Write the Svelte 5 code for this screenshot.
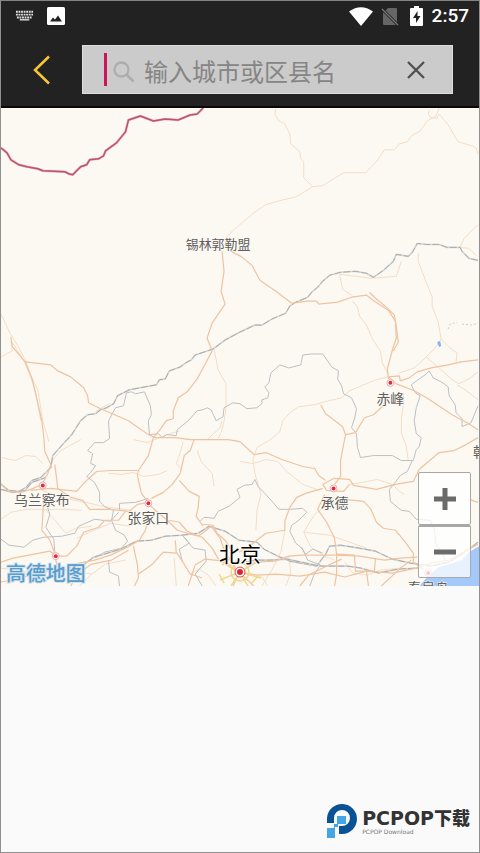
<script>
  let city = $state('');
  let zoom = $state(6);

  const tint = [
    '240,223 253,212 266,203 280,199 297,195 305,190 313,185 323,184 331,179 344,171 357,171 366,171 377,160 385,148 395,148 400,142 408,140 412,134 421,129 428,119 437,114 440,106',
    '276,107 275,112 279,119 285,122 290,132 291,142 300,150 301,157 304,160 304,176 313,185',
    '430,108 429,112 432,116 438,116 440,112 449,123 459,140 473,144 477,146 479,152',
    '479,223 465,237 461,246 470,247 478,255',
    '225,243 227,235 233,229 240,223',
    '419,252 419,260 427,281 433,296 433,305 439,321 442,338 436,347 427,356 415,367 400,372',
    '442,338 452,348 458,352 457,361',
    '340,273 343,288 352,294',
    '353,300 358,306 360,315 367,324 373,338 381,350 383,362 389,374',
    '340,273 372,277 397,275 402,260',
    '389,376 376,379 362,385 350,390 342,397 325,401 315,404 299,406 290,412 283,420 280,431 269,440 257,447 253,459',
    '427,356 440,367 452,378 460,383 470,378 479,371',
    '458,384 466,389 479,399',
    '0,356 11,350 11,341 24,361',
    '214,348 218,369 226,383 226,408 224,420 221,432 218,438',
    '95,411 103,406 109,403',
    '0,313 9,332 17,345 25,360 30,375 37,389 42,420 48,441',
    '24,361 34,388 40,420',
    '1,457 14,460 25,455 35,456 42,463',
    '50,462 60,450 69,445 80,439',
    '240,461 253,463 266,459 278,461 287,471 303,484 320,490',
    '253,459 255,473 261,494 257,510 256,530',
    '404,392 404,405 402,418 402,432 407,446 409,460',
    '350,484 363,482 378,479 393,484 400,491 405,494',
    '304,532 315,514 325,507',
    '41,490 64,498 85,502 102,506 131,510',
    '0,519 10,512 25,509 42,509 65,509 81,510',
    '45,509 50,516 55,521 65,533 75,528 91,526',
    '76,538 91,531 110,523 130,526',
    '133,439 147,442 167,434 180,430',
    '222,420 220,427 207,439',
    '167,470 158,474 143,476 133,472 121,474 108,473',
    '174,558 175,572 176,586',
    '0,568 20,571 41,573 60,569 75,571 91,574',
    '79,586 90,575 105,564 125,560',
    '197,450 201,461 212,473 214,486',
    '345,562 353,573 368,575 381,570 401,568',
    '304,532 311,547 325,556 335,560',
    '304,532 330,535 350,542 367,548',
    '182,470 176,463 180,452 183,441',
    '262,586 272,570 281,552 285,530',
    '286,586 291,573 289,556',
    '216,586 208,575 199,569 190,574',
    '268,586 262,577 257,575'
  ];

  const roads = [
    '228,248 235,252 241,255 252,264 260,279 276,290 292,302 308,300 317,300 319,303 338,301 352,296 367,294 375,300 389,309 396,320 397,337 393,349 388,368 389,378',
    '370,291 376,297 388,307 395,314 397,326 399,341 394,350',
    '222,250 224,270 221,290 225,303 212,322 207,337 212,350 205,363 197,378 187,391 178,397 173,410 173,418 166,420 159,430 153,437 148,455 138,470 137,475 141,493 148,502',
    '24,361 50,364 57,370 70,376 83,387 87,395 88,402 100,408 128,420 138,427 148,434 155,437 175,437 190,439 210,439 228,439 240,441',
    '10,336 11,345 20,356 24,361 31,377 36,398 41,420 43,437 44,451 50,464 47,473 41,484',
    '0,483 7,491 20,492 30,489 41,484',
    '30,490 50,488 76,491 84,482 96,471 110,470 137,470',
    '54,464 56,479 57,488 70,497 82,500 89,509 110,509 129,511 137,504 148,502',
    '194,439 190,450 184,455 180,473 172,484 163,492 151,498',
    '179,480 189,491 199,496 198,507 196,516 203,526',
    '479,359 462,361 449,364 432,367 418,371 410,377 401,380 400,375 389,376',
    '389,376 397,383 415,390 429,398 441,406 453,414 468,422 479,429',
    '388,394 384,405 374,414 365,417 356,432 346,434 344,444 341,460 341,476 335,484',
    '321,404 326,413 334,419 343,426 346,434',
    '479,437 467,444 455,450 440,452 428,462 420,469 414,481 396,484 377,489 354,485 350,479 334,478 323,484 327,490 344,491 350,484',
    '323,488 306,493 297,497 290,507 285,521 285,530 266,533 252,544 239,552',
    '240,441 254,454 266,452 282,459 303,466 315,468 319,475 326,480',
    '325,494 318,509 327,522 335,538 337,554 337,574 335,586',
    '345,499 364,501 371,508 377,522 384,528 396,530 406,542 414,553 414,562 425,570',
    '43,498 42,515 41,530 49,540 54,553 56,565 50,576',
    '0,562 12,558 28,555 49,551 57,556 66,556 76,546 83,532 98,527 104,520 118,520 125,511',
    '67,570 73,564 94,560 110,555 127,547 139,540 145,530 148,519',
    '70,586 77,574 91,564 111,560 128,550',
    '133,546 137,565 138,578 134,586',
    '147,502 155,510 167,520 177,530 198,536 206,530 211,526 220,538 225,552 239,573',
    '169,520 179,522 187,531 202,537 212,548 219,560 239,573',
    '203,524 213,525 217,533 226,541 230,548',
    '175,540 176,552 182,561 190,574 202,578',
    '138,574 151,565 163,552 176,553',
    '240,572 257,562 275,561 289,556 302,555 337,555 360,556 385,560 401,558 418,557',
    '240,572 257,575 276,574 300,576 325,572 345,577 367,571 393,573 417,568 432,563 450,560 479,544',
    '337,554 355,555 356,571 375,571 376,558',
    '239,573 225,561 205,559 195,565 188,586',
    '240,573 254,586',
    '239,573 233,586',
    '300,586 309,575 327,566 342,559',
    '367,571 369,586',
    '382,586 400,569 412,560',
    '0,582 17,579 38,572 51,570',
    '479,502 470,499'
  ];

  const rail = [
    '479,259 470,257 463,250 461,246 448,246 440,243 427,243 418,242 413,251 409,255 397,253 394,260 384,269 374,276 367,272 356,270 341,271 330,274 323,280 318,286 312,291 308,296 296,301 290,305 286,312 272,318 262,324 255,324 240,331 225,339 213,348 195,354 191,359 187,361 180,366 169,370 165,378 159,379 156,384 145,386 129,389 117,395 113,403 106,407 100,409 95,413 87,414 80,420 71,434 60,446 52,455 50,467 40,477 31,480 25,487 18,491 8,490 0,484',
    '0,489 12,492 24,490 31,482 45,477',
    '80,567 93,557 107,553 120,549 136,541 151,540 165,536 181,535 198,533 209,526 225,531 239,540 257,542 264,549 278,556 290,561 317,566 326,554 330,546 341,545 360,548 376,551 393,559 411,563 432,566 450,562 466,552 479,542',
    '240,563 257,560 270,560 287,559 306,563 320,566 348,566 361,568 379,573 399,569 420,568'
  ];

  const borders = [
    '108,420 115,407 123,405 126,392 131,391 135,393 144,391 150,405 151,414 148,420 149,434 158,433 162,437 166,434 176,435 177,429 188,420 197,410 203,409 207,407 211,409 216,420 223,416 224,407 233,402 240,403 247,408 257,407 262,403 262,399 268,397 269,392 265,386 269,382 271,372 280,364 289,367 301,364 303,354 312,353 323,353 328,360 332,366 339,370 338,378 342,385 344,393 352,397 357,408 355,418 352,427 357,433 358,447 361,457 374,455 393,455 402,460 414,460 417,449 420,446 422,437 417,433 415,420 417,407 421,395 416,392 412,384 420,378 426,374 430,370 434,377 442,381 449,386 450,395 456,404 457,412 463,418 463,426 472,422 477,410 479,405',
    '108,420 109,438 103,442 94,442 87,450 92,453 90,463 95,465 90,472 86,476 94,482 99,492 99,501 105,507 113,510 111,520 115,530 124,535 127,541 121,548 104,552 94,558',
    '119,510 119,503 135,502 148,498',
    '44,498 49,514 45,527 53,539 54,552',
    '0,539 8,545 23,547 32,540 43,537 61,536 74,533 78,526 94,519 110,521 118,512',
    '200,521 204,517 214,518 218,511 229,506 240,497 237,489 244,485 252,484 255,479 258,486 265,493 273,502 279,509 290,509 303,508 307,512 299,520 292,525 290,531 296,543 301,547 306,554 313,549 323,553',
    '413,460 408,471 401,475 395,483 390,489 391,501 402,510 410,511 417,519 431,520 435,529 437,544 443,553 446,560',
    '183,536 193,548 205,550 206,561 195,574 202,586',
    '183,536 189,543 179,549 182,561',
    '302,547 308,560 321,565 315,573 310,586',
    '108,560 109,572 118,576 119,586'
  ];

  const hubs = [
    { x: 42, y: 485, name: '乌兰察布', tx: 41, ty: 505 },
    { x: 148, y: 503, name: '张家口', tx: 148, ty: 523 },
    { x: 391, y: 382, name: '赤峰', tx: 391, ty: 403 },
    { x: 334, y: 488, name: '承德', tx: 335, ty: 508 },
    { x: 55, y: 556, name: '', tx: 0, ty: 0 },
    { x: 429, y: 573, name: '秦皇岛', tx: 429, ty: 593 }
  ];
</script>

<main class="screen">
  <header>
    <div class="status">
      <svg class="kbd" viewBox="0 0 20 12" aria-hidden="true">
        <path d="M1 1.5h18M1 4.5h18M2 7.5h16" stroke="#ddd" stroke-width="2" stroke-dasharray="2 .7" fill="none" />
        <path d="M5 10h10" stroke="#ddd" stroke-width="1.5" />
      </svg>
      <svg class="photo" viewBox="0 0 18 18" aria-hidden="true">
        <rect width="18" height="18" rx="1.5" fill="#fff" />
        <path d="M3 14.500l3-4 2 2 3-4 4 6z" fill="#222" />
      </svg>
      <span class="grow"></span>
      <svg class="wifi" viewBox="0 0 24 19" aria-hidden="true">
        <path d="M0 4.500Q12-4 24 4.500L12 19z" fill="#fff" />
      </svg>
      <svg class="sim" viewBox="0 0 18 19" aria-hidden="true">
        <path d="M7 1h8q1 0 1 1v16H3q-1 0-1-1V6z" fill="#666" />
        <path d="M0 1l17 17" stroke="#222" stroke-width="3" />
        <path d="M1 2l16 16" stroke="#777" stroke-width="1.300" />
      </svg>
      <svg class="battery" viewBox="0 0 13 20" aria-hidden="true">
        <path d="M4 0h5v2h3q1 0 1 1v16q0 1-1 1H1q-1 0-1-1V3q0-1 1-1h3z" fill="#fff" />
        <path d="M7.500 5L3 12h3v5l4.500-7h-3z" fill="#222" />
      </svg>
      <time>2:57</time>
    </div>
    <div class="bar">
      <button class="back" aria-label="返回">
        <svg viewBox="0 0 18 30" aria-hidden="true"><path d="M16 1.500L2 15l14 13.500" fill="none" stroke="#f8c830" stroke-width="2.500" /></svg>
      </button>
      <div class="search">
        <span class="caret"></span>
        <svg class="glass" viewBox="0 0 22 22" aria-hidden="true">
          <circle cx="8.500" cy="8.500" r="7" fill="none" stroke="#adadad" stroke-width="2.300" />
          <path d="M13.500 13.500l7 7" stroke="#adadad" stroke-width="2.600" />
        </svg>
        <input type="text" aria-label="城市" placeholder="输入城市或区县名" bind:value={city} />
        <button class="clear" aria-label="清除" onclick={() => (city = '')}>
          <svg viewBox="0 0 18 18" aria-hidden="true"><path d="M1 1l16 16M17 1L1 17" stroke="#505050" stroke-width="2.300" /></svg>
        </button>
      </div>
    </div>
  </header>

  <section class="map">
    <svg class="canvas" viewBox="0 106 480 480" role="img" aria-label="地图">
      <rect y="106" width="480" height="480" fill="#fcf9f2" />
      <path d="M480 546L470 552 463 560 448 565 440 567 430 575 420 586H480z" fill="#a3c9fb" />
      <g fill="none" stroke-linejoin="round">
        {#each tint as p}<polyline points={p} stroke="#f2ddc8" stroke-width="1" />{/each}
        {#each borders as p}<polyline points={p} stroke="#bcbec4" stroke-width="1" />{/each}
        {#each rail as p}
          <polyline points={p} stroke="#d6d6d4" stroke-width="1.600" />
          <polyline points={p} stroke="#a4a7aa" stroke-width="0.900" stroke-dasharray="7 2" />
        {/each}
        {#each roads as p}<polyline points={p} stroke="#efc3a0" stroke-width="1.200" />{/each}
        <g stroke="#f0d890" stroke-width="1.500">
          <circle cx="240" cy="572" r="9" />
          <path d="M240 572l-18-10M240 572l-20 8M240 572l-9 14M240 572l8 14M240 572l21 6M240 572l17-11M222 565l8-7M224 583l-5-9M251 584l8-9" />
        </g>
        <path d="M0 146L6 151 10 158 18 163 26 165 37 167 42 169 64 170 68 172 72 173 80 165 86 163 89 158 98 157 103 154 105 149 116 141 125 130 128 118 140 114 153 119 165 117 178 118 190 113 197 112 203 106" stroke="#e3b6bd" stroke-width="2.500" />
        <path d="M0 146L6 151 10 158 18 163 26 165 37 167 42 169 64 170 68 172 72 173 80 165 86 163 89 158 98 157 103 154 105 149 116 141 125 130 128 118 140 114 153 119 165 117 178 118 190 113 197 112 203 106" stroke="#c0536b" stroke-width="1.500" />
        <path d="M449 328l2-5 7-2M463 323l10 1 6-2" stroke="#c8cdd4" stroke-dasharray="2 2" />
      </g>
      <path d="M438 341l3-1 1 5-2 1z" fill="#7fb2ee" />
      {#each hubs as h}
        <circle cx={h.x} cy={h.y} r="3.500" fill="#fff" stroke="#f0a8a8" />
        <circle cx={h.x} cy={h.y} r="2" fill="#e02c40" />
        {#if h.name}<text class="label" x={h.tx} y={h.ty}>{h.name}</text>{/if}
      {/each}
      <circle cx="240" cy="572" r="5" fill="#fff" stroke="#d84848" />
      <circle cx="240" cy="572" r="3" fill="#e02030" />
      <text class="label small" x="218" y="248">锡林郭勒盟</text>
      <text class="label start" x="474" y="456">朝阳</text>
      <text class="capital" x="240" y="562">北京</text>
      <text class="brand" x="5" y="581">高德地图</text>
    </svg>
    <div class="zoom">
      <button aria-label="放大" onclick={() => zoom++}>
        <svg viewBox="0 0 22 22" aria-hidden="true"><path d="M11 0v22M0 11h22" stroke="#6b6b6b" stroke-width="5" /></svg>
      </button>
      <button aria-label="缩小" onclick={() => zoom--}>
        <svg viewBox="0 0 22 22" aria-hidden="true"><path d="M0 11h22" stroke="#6b6b6b" stroke-width="5" /></svg>
      </button>
    </div>
  </section>

  <footer>
    <svg class="logo" viewBox="0 0 32 36" aria-hidden="true">
      <path d="M0 20V15A15 15 0 1 1 15 31H12V23H15A8 8 0 1 0 7 15V20z" fill="#0a5296" />
      <path d="M10 13h9v8h-8v3H8v11H0V25h7v-4h3z" fill="#45a6e6" />
    </svg>
    <div class="words">
      <strong>PCPOP<span>下载</span></strong>
      <small>PCPOP Download</small>
    </div>
  </footer>
</main>

<style>
  :global(body) {
    margin: 0;
    background: #fafafa;
  }
  .screen {
    box-sizing: border-box;
    min-height: 100vh;
    display: flex;
    flex-direction: column;
    border: 1px solid #909090;
    border-top-color: #808684;
    background: #fafafa;
    font-family: Roboto, 'Noto Sans CJK SC', sans-serif;
  }
  svg {
    display: block;
  }
  button {
    padding: 0;
    border: 0;
    background: none;
    display: flex;
    align-items: center;
    justify-content: center;
    cursor: pointer;
  }
  header {
    background: #222;
    border-bottom: 2px solid #080808;
  }
  .status {
    display: flex;
    align-items: center;
    height: 30px;
    padding: 0 10px 0 14px;
  }
  .kbd {
    width: 19px;
    height: 12px;
    margin-right: 13px;
  }
  .photo {
    width: 18px;
    height: 18px;
  }
  .grow {
    flex: 1;
  }
  .wifi {
    width: 24px;
    height: 19px;
    margin-right: 8px;
  }
  .sim {
    width: 18px;
    height: 19px;
    margin-right: 11px;
  }
  .battery {
    width: 13px;
    height: 20px;
    margin-right: 9px;
  }
  time {
    color: #fff;
    font-size: 19px;
    line-height: 32px;
    font-weight: 500;
  }
  .bar {
    display: flex;
    align-items: center;
    padding: 14px 26px 12px 0;
  }
  .back {
    width: 81px;
    height: 48px;
  }
  .back svg {
    width: 18px;
    height: 30px;
  }
  .search {
    flex: 1;
    min-width: 0;
    box-sizing: border-box;
    height: 49px;
    display: flex;
    align-items: center;
    padding: 0 16px 0 21px;
    background: #cbcbcb;
    border: 1px solid #dedede;
  }
  .caret {
    width: 3px;
    height: 33px;
    margin-right: 6px;
    background: #cc1458;
  }
  .glass {
    width: 22px;
    height: 22px;
    margin: 4px 9px 0 0;
    flex: none;
  }
  input {
    flex: 1;
    min-width: 0;
    height: 44px;
    padding: 2px 0 0;
    border: 0;
    outline: 0;
    background: none;
    font-family: 'Noto Sans CJK SC', sans-serif;
    font-size: 24px;
    line-height: 36px;
    color: #222;
    caret-color: transparent;
  }
  input::placeholder {
    color: #858585;
    opacity: 1;
  }
  .clear {
    width: 40px;
    height: 40px;
  }
  .clear svg {
    width: 18px;
    height: 18px;
  }
  .map {
    position: relative;
    overflow: hidden;
  }
  .canvas {
    width: 100%;
    height: auto;
  }
  text {
    font-family: 'Noto Sans CJK SC', sans-serif;
  }
  .label {
    font-size: 14px;
    fill: #606060;
    text-anchor: middle;
    paint-order: stroke;
    stroke: #fcf9f2;
    stroke-width: 1px;
  }
  .small {
    font-size: 13px;
  }
  .start {
    text-anchor: start;
  }
  .capital {
    font-size: 21px;
    font-weight: 400;
    text-anchor: middle;
    fill: #000;
    paint-order: stroke;
    stroke: #fcf9f2;
    stroke-width: 2px;
  }
  .brand {
    font-size: 20px;
    font-weight: 500;
    fill: #5a9cca;
    paint-order: stroke;
    stroke: #d3e6f2;
    stroke-width: 2px;
  }
  .zoom {
    position: absolute;
    right: 8px;
    bottom: 8px;
    display: flex;
    flex-direction: column;
  }
  .zoom button {
    box-sizing: border-box;
    width: 53px;
    height: 53px;
    border: 1px solid #a8a8a8;
    border-radius: 2px;
    background: rgba(255, 255, 255, 0.75);
  }
  .zoom button + button {
    border-top-width: 2px;
  }
  .zoom svg {
    width: 22px;
    height: 22px;
  }
  footer {
    margin-top: auto;
    display: flex;
    justify-content: flex-end;
    align-items: center;
    padding: 0 9px 13px 0;
  }
  .logo {
    width: 32px;
    height: 36px;
    margin-right: 3px;
  }
  .words {
    display: flex;
    flex-direction: column;
  }
  strong {
    font-family: 'DejaVu Sans', sans-serif;
    font-size: 19px;
    line-height: 20px;
    color: #333;
    white-space: nowrap;
  }
  strong span {
    font-family: 'Noto Sans CJK SC', sans-serif;
    font-size: 18px;
    font-weight: 900;
  }
  small {
    font-family: 'DejaVu Sans', sans-serif;
    font-size: 6px;
    line-height: 8px;
    color: #777;
  }
</style>
